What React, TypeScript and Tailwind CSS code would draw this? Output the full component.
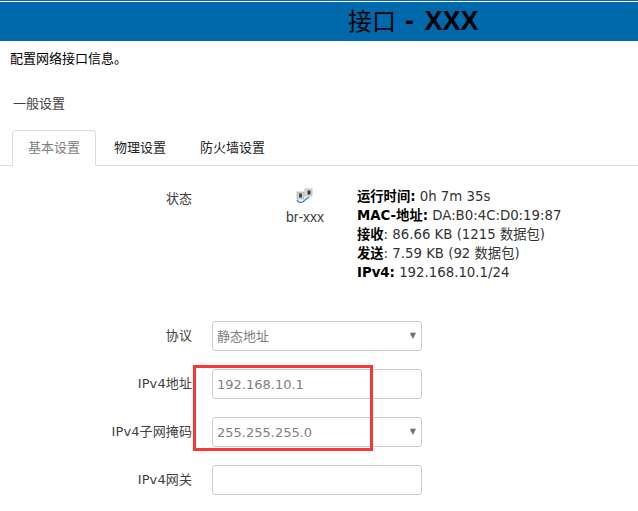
const CJK = "font-['DejaVu_Sans','Noto_Sans_CJK_SC',sans-serif]";

interface FieldProps {
  label: string;
  value?: string;
  select?: boolean;
}

function Field({ label, value, select }: FieldProps) {
  return (
    <div className="flex h-[30px] items-center">
      <label className="w-[192px] text-right text-[13px] tracking-[0.1px] text-[#404040]">{label}</label>
      <div className="relative ml-5 flex h-[30px] w-[210px] items-center rounded-[3px] border border-[#cccccc] bg-white pl-[4px] pt-[1px] text-[13px] text-[#808080]">
        {value}
        {select && <span className="absolute right-[5px] top-[8px] text-[8px] leading-[12px] text-[#707070]">▼</span>}
      </div>
    </div>
  );
}

function BridgeIcon() {
  return (
    <svg width="20" height="16" viewBox="0 0 20 16" fill="none">
      <rect x="2" y="4" width="7" height="7" fill="#d4d4d4" stroke="#a0a0a0" strokeWidth="0.6" />
      <rect x="10" y="1" width="7" height="7" fill="#e0e0e0" stroke="#a0a0a0" strokeWidth="0.6" />
      <rect x="4" y="5.5" width="3" height="4" fill="#444" />
      <rect x="12.5" y="2.5" width="3" height="4" fill="#333" />
      <path d="M2 12c1 3 5 3 7 1s3-3 5-4" stroke="#3b7fd0" strokeWidth="1.3" />
    </svg>
  );
}

export default function App() {
  return (
    <div className={`relative h-[511px] w-[638px] overflow-hidden bg-white ${CJK}`}>
      <div className="pt-[1px] bg-[#0069ac]">
        <div className="h-[1px] bg-white" />
        <h1 className="flex h-[39px] items-center pl-[348px] font-['Liberation_Sans','Noto_Sans_CJK_SC',sans-serif] text-[27px] font-bold text-black">
          <span className="text-[24px] font-normal">接口</span>
          <span className="ml-[9px] [word-spacing:3px]">- XXX</span>
        </h1>
      </div>

      <p className="mt-[9px] pl-[10px] text-[13px] leading-[17px] text-black">配置网络接口信息。</p>
      <h2 className="mt-[28px] pl-[13px] text-[13px] leading-[17px] text-[#404040]">一般设置</h2>

      <div className="mt-[18px] flex h-[36px] border-b border-[#dddddd] pl-3 text-[13px]">
        <div className="flex h-[36px] w-[84px] items-center justify-center rounded-t-[4px] border border-b-white border-[#dddddd] bg-white text-[#808080]">基本设置</div>
        <div className="flex h-[35px] w-[88px] items-center justify-center text-[#222222]">物理设置</div>
        <div className="flex h-[35px] items-center pl-[16px] text-[#222222]">防火墙设置</div>
      </div>

      <div className="mt-[21px] flex">
        <div className="w-[192px] pt-[3px] text-right text-[13px] leading-[17px] text-[#404040]">状态</div>
        <div className="ml-[84px] flex w-[58px] flex-col items-center pt-[1px] text-[14px] text-[#404040]">
          <BridgeIcon />
          <span className="mt-[3px] font-['Liberation_Sans',sans-serif]">br-xxx</span>
        </div>
        <div className="ml-[23px] text-[13.3px] leading-[19px] text-[#333333]">
          <div><b className="text-black">运行时间:</b> 0h 7m 35s</div>
          <div><b className="text-black">MAC-地址:</b> DA:B0:4C:D0:19:87</div>
          <div><b className="text-black">接收</b>: 86.66 KB (1215 数据包)</div>
          <div><b className="text-black">发送</b>: 7.59 KB (92 数据包)</div>
          <div><b className="text-black">IPv4:</b> 192.168.10.1/24</div>
        </div>
      </div>

      <div className="mt-[39px] flex flex-col gap-[18px]">
        <Field label="协议" value="静态地址" select />
        <Field label="IPv4地址" value="192.168.10.1" />
        <Field label="IPv4子网掩码" value="255.255.255.0" select />
        <Field label="IPv4网关" />
      </div>

      {/* red annotation drawn over the form */}
      <div className="absolute left-[193px] top-[365px] h-[86px] w-[180px] border-[3px] border-[#f53838]" />
    </div>
  );
}
